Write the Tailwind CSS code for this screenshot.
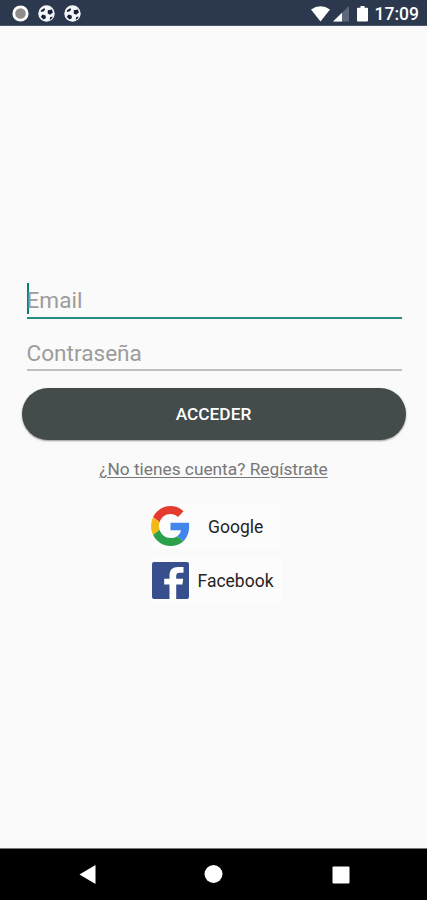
<!DOCTYPE html>
<html lang="es">
<head>
<meta charset="utf-8">
<title>Acceder</title>
<script src="https://cdn.jsdelivr.net/npm/@tailwindcss/browser@4"></script>
</head>
<body class="flex h-[900px] w-[427px] flex-col overflow-hidden bg-[#fafafa] font-[Roboto,sans-serif]">
<header class="flex h-[26px] shrink-0 items-center justify-between border-b border-[#4b566b] bg-[#2c384e] pt-[2px] pr-2 pl-3">
  <div class="flex items-center gap-[9px]">
    <svg class="size-[17px]" viewBox="0 0 17 17"><circle cx="8.5" cy="8.5" r="6.7" fill="#8d8d8d" stroke="#fff" stroke-width="2.8"/></svg>
    <svg class="size-[17px]" viewBox="0 0 17 17"><circle cx="8.5" cy="8.5" r="8.2" fill="#f4f6fa"/><path d="M9.8 5.3l4.1-.7 1 3-2.8 2.2-2.4-1.4zM3 5.2l3.2-2 1 .8-1.2 2.2-3.2.9zM4.6 9.6l3 .9.3 2.8-2.6 1.1-2.5-2.6zM12 12.2l2.6-.8-.6 1.9-2.2 1.6z" fill="#172238"/></svg>
    <svg class="size-[17px]" viewBox="0 0 17 17"><circle cx="8.5" cy="8.5" r="8.2" fill="#f4f6fa"/><path d="M9.8 5.3l4.1-.7 1 3-2.8 2.2-2.4-1.4zM3 5.2l3.2-2 1 .8-1.2 2.2-3.2.9zM4.6 9.6l3 .9.3 2.8-2.6 1.1-2.5-2.6zM12 12.2l2.6-.8-.6 1.9-2.2 1.6z" fill="#172238"/></svg>
  </div>
  <div class="flex items-center">
    <svg class="h-[16px] w-[58px]" viewBox="0 0 58 16"><path d="M0 3.6Q9.5-3 19 3.6L9.5 15.5z" fill="#fff"/><path d="M38 0v15.5H22z" fill="#5d687b"/><path d="M31 6.8v8.7h-9z" fill="#fff"/><path d="M47 1.8h2.5V0h4v1.8H56q1 0 1 1v11.7q0 1-1 1h-9q-1 0-1-1V2.8q0-1 1-1z" fill="#fff"/></svg>
    <span class="ml-[6px] pt-px text-[17.5px] leading-5 font-medium text-white">17:09</span>
  </div>
</header>
<main class="flex h-[822px] shrink-0 flex-col items-center pt-[254px]">
  <div class="ml-px flex h-[39px] w-[375px] items-center border-b-2 border-[#258d82]">
    <span class="-mt-[1px] h-[31px] w-[2px] bg-[#087f72]"></span>
    <span class="-ml-[2px] pt-[5px] text-[22.6px] leading-[28px] text-[#9c9c9c]">Email</span>
  </div>
  <div class="ml-px flex h-[52px] w-[375px] items-center border-b-2 border-[#c0c0c0] pt-[20px]">
    <span class="text-[22.6px] leading-[28px] text-[#9c9c9c]">Contraseña</span>
  </div>
  <button class="mt-[17px] h-[52px] w-[384px] rounded-full bg-[#434b4b] pt-[2px] text-[17.3px] font-medium text-white shadow-[0_1px_2px_rgba(0,0,0,0.4)]">ACCEDER</button>
  <a class="mt-[18px] text-[17.3px] leading-[22px] text-[#777] underline decoration-1 underline-offset-2">¿No tienes cuenta? Regístrate</a>
  <div class="mt-[23px] ml-[151px] flex h-[46px] w-[130px] items-center self-start bg-[#fcfcfc]">
    <svg class="h-[40px] w-[39px] shrink-0" viewBox="0 0 48 48" preserveAspectRatio="none"><path fill="#e53b2e" d="M24 9.5c3.54 0 6.71 1.22 9.21 3.6l6.85-6.85C35.9 2.38 30.47 0 24 0 14.62 0 6.51 5.38 2.56 13.22l7.98 6.19C12.43 13.72 17.74 9.5 24 9.5z"/><path fill="#4286ed" d="M46.98 24.55c0-1.57-.15-3.09-.38-4.55H24v9.02h12.94c-.58 2.96-2.26 5.48-4.78 7.18l7.73 6c4.51-4.18 7.09-10.36 7.09-17.65z"/><path fill="#f4b914" d="M10.53 28.59A14.5 14.5 0 0 1 9.77 24c0-1.6.27-3.14.76-4.59l-7.98-6.19A23.8 23.8 0 0 0 0 24c0 3.88.92 7.54 2.56 10.78z"/><path fill="#2ba14b" d="M24 48c6.48 0 11.93-2.13 15.89-5.81l-7.73-6c-2.15 1.45-4.92 2.3-8.16 2.3-6.26 0-11.57-4.22-13.47-9.91l-7.98 6.19C6.51 42.62 14.62 48 24 48z"/></svg>
    <span class="ml-[18px] pt-[2px] text-[17.5px] leading-6 text-[#242424]">Google</span>
  </div>
  <div class="mt-[8px] ml-[152px] flex h-[46px] w-[130px] items-center self-start bg-[#fcfcfc]">
    <svg class="size-[37px] shrink-0" viewBox="0 0 37 37"><rect width="37" height="37" rx="2" fill="#374f8d"/><path fill="#fff" d="M17.5 37V22.6h-5.3v-5.9h5.3v-3.3C17.5 7.8 20.8 5 26 5h5.5v5.7h-3.7c-2.8 0-3.6 1.2-3.6 3.3v2.7h7l-.8 5.9h-6.2V37z"/></svg>
    <span class="ml-[8.5px] pt-[2px] text-[17.5px] leading-6 text-[#242424]">Facebook</span>
  </div>
</main>
<nav class="flex h-[52px] shrink-0 items-center justify-between border-t border-[#777] bg-black pr-[77px] pl-[79px]">
  <svg class="h-[20px] w-[17px]" viewBox="0 0 17 20"><path d="M.5 9.5L16.5 0v19z" fill="#fff"/></svg>
  <svg class="mr-[2px] size-[19px]" viewBox="0 0 19 19"><circle cx="9.5" cy="9" r="9" fill="#fff"/></svg>
  <svg class="size-[18px]" viewBox="0 0 18 18"><rect x=".5" y=".5" width="17" height="17" rx="1" fill="#fff"/></svg>
</nav>
</body>
</html>
